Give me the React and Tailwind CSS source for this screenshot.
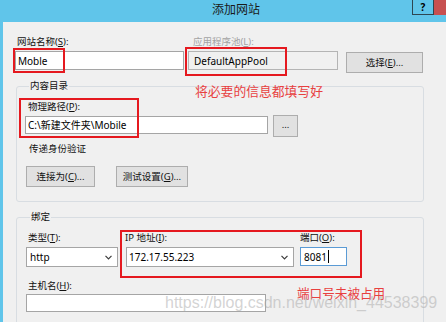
const U = ({ children }) => <span className="underline">{children}</span>;

const Chevron = () => (
  <svg width="7" height="5" viewBox="0 0 7 5" className="shrink-0">
    <path d="M0.5 0.8 L3.5 3.8 L6.5 0.8" fill="none" stroke="#3c3c3c" strokeWidth="1.2" />
  </svg>
);

const Btn = ({ w, children }) => (
  <div
    className={`${w} h-[21px] bg-[#e1e1e1] border border-[#adadad] flex items-center justify-center text-[#111]`}
  >
    {children}
  </div>
);

export default function App() {
  return (
    <div className="relative w-[446px] h-[322px] overflow-hidden bg-[#60c5ea] flex flex-col font-['Noto_Sans','Noto_Sans_CJK_SC',sans-serif] text-[9.5px] leading-[12px] text-[#111]">
      {/* title bar */}
      <div className="h-[22px] flex items-start shrink-0">
        <div className="ml-[212px] mt-[4px] text-[12px] leading-[12px] text-[#1a1a1a]">添加网站</div>
        <div className="ml-auto flex">
          <div className="w-[22px] h-[15px] border-x border-b border-[#2e4652] flex items-center justify-center text-[10px] font-bold leading-none text-black">
            ?
          </div>
          <div className="w-[12px] h-[15px] bg-[#c75050]"></div>
        </div>
      </div>

      {/* body */}
      <div className="flex-1 ml-[3px] bg-[#f0f0f0] pl-[12px] pt-[14px] flex flex-col items-start">
        {/* row 1 */}
        <div className="flex items-start">
          <div className="w-[169px] flex flex-col">
            <div className="ml-[2px]">
              网站名称(<U>S</U>):
            </div>
            <div className="mt-[3px] h-[19px] bg-white border border-[#a5a5a5] flex items-center pl-[2px] text-[10px] text-black">
              Moble
            </div>
          </div>
          <div className="ml-[4px] w-[150px] flex flex-col">
            <div className="ml-[5px] text-[#a3a3a3]">
              应用程序池(<U>L</U>):
            </div>
            <div className="mt-[3px] h-[19px] bg-[#f0f0f0] border border-[#b4b4b4] flex items-center pl-[5px] text-[10px] text-black">
              DefaultAppPool
            </div>
          </div>
          <div className="ml-[8px] pt-[16px]">
            <Btn w="w-[77px]">
              选择(<U>E</U>)...
            </Btn>
          </div>
        </div>

        {/* content directory */}
        <fieldset className="mt-[7px] ml-[1px] w-[408px] border border-[#d8dde2] rounded-[3px] pl-[8px] pb-[14px] flex flex-col">
          <legend className="ml-[4px] px-[1px] leading-[12px]">内容目录</legend>
          <div className="mt-[9px] ml-[3px]">
            物理路径(<U>P</U>):
          </div>
          <div className="mt-[2px] flex items-start">
            <div className="mt-[1px] w-[243px] h-[18px] bg-white border border-[#a5a5a5] flex items-center pl-[2px] text-[10px] text-black">
              C:\新建文件夹\Mobile
            </div>
            <div className="ml-[5px] w-[25px] h-[22px] bg-[#e1e1e1] border border-[#adadad] flex items-center justify-center leading-none pb-[3px]">
              ...
            </div>
          </div>
          <div className="mt-[6px] ml-[4px]">传递身份验证</div>
          <div className="mt-[11px] ml-[1px] flex gap-[21px]">
            <Btn w="w-[69px]">
              连接为(<U>C</U>)...
            </Btn>
            <Btn w="w-[72px]">
              测试设置(<U>G</U>)...
            </Btn>
          </div>
        </fieldset>

        {/* binding */}
        <fieldset className="mt-[9px] ml-[1px] w-[408px] border border-[#d8dde2] rounded-[3px] pl-[9px] pb-[20px] flex flex-col">
          <legend className="ml-[4px] px-[1px] leading-[12px]">绑定</legend>
          <div className="mt-[9px] flex items-start">
            <div className="w-[92px] flex flex-col">
              <div className="ml-[2px]">
                类型(<U>T</U>):
              </div>
              <div className="mt-[3px] h-[20px] bg-white border border-[#a5a5a5] flex items-center pl-[3px] pr-[5px] justify-between text-[10px] text-black">
                <span>http</span>
                <Chevron />
              </div>
            </div>
            <div className="ml-[8px] w-[168px] flex flex-col">
              <div className="-ml-[1px]">
                IP 地址(<U>I</U>):
              </div>
              <div className="mt-[3px] h-[20px] bg-white border border-[#a5a5a5] flex items-center pl-[2px] pr-[5px] justify-between text-[10px] text-black">
                <span>172.17.55.223</span>
                <Chevron />
              </div>
            </div>
            <div className="ml-[6px] w-[47px] flex flex-col">
              <div>
                端口(<U>O</U>):
              </div>
              <div className="mt-[3px] h-[19px] bg-white border border-[#5b9bd5] flex items-center pl-[3px] text-[10px] text-black">
                <span>8081</span>
                <span className="ml-[1px] w-[1px] h-[13px] bg-black"></span>
              </div>
            </div>
          </div>
          <div className="mt-[13px] ml-[2px]">
            主机名(<U>H</U>):
          </div>
          <div className="mt-[2px] w-[240px] h-[18px] bg-white border border-[#a5a5a5]"></div>
        </fieldset>
      </div>

      {/* red annotation boxes */}
      <div className="absolute left-[13px] top-[48px] w-[52px] h-[25px] border-2 border-[#e5191f]"></div>
      <div className="absolute left-[185px] top-[47px] w-[102px] h-[29px] border-2 border-[#e5191f]"></div>
      <div className="absolute left-[19px] top-[98px] w-[120px] h-[40px] border-2 border-[#e5191f]"></div>
      <div className="absolute left-[120px] top-[230px] w-[242px] h-[48px] border-2 border-[#e5191f]"></div>

      {/* annotations */}
      <div className="absolute left-[195px] top-[84px] text-[12.8px] leading-[13px] text-[#e8403f] font-['Noto_Sans_CJK_SC',serif]">
        将必要的信息都填写好
      </div>
      <div className="absolute left-[297px] top-[286px] text-[12.6px] leading-[13px] text-[#e8403f] font-['Noto_Sans_CJK_SC',serif]">
        端口号未被占用
      </div>

      {/* watermark */}
      <div className="absolute left-[165px] top-[295px] text-[16px] leading-[16px] font-['Liberation_Sans',Arial,sans-serif] text-[#a8a8a8]/50 whitespace-nowrap">
        https://blog.csdn.net/weixin_44538399
      </div>
    </div>
  );
}
